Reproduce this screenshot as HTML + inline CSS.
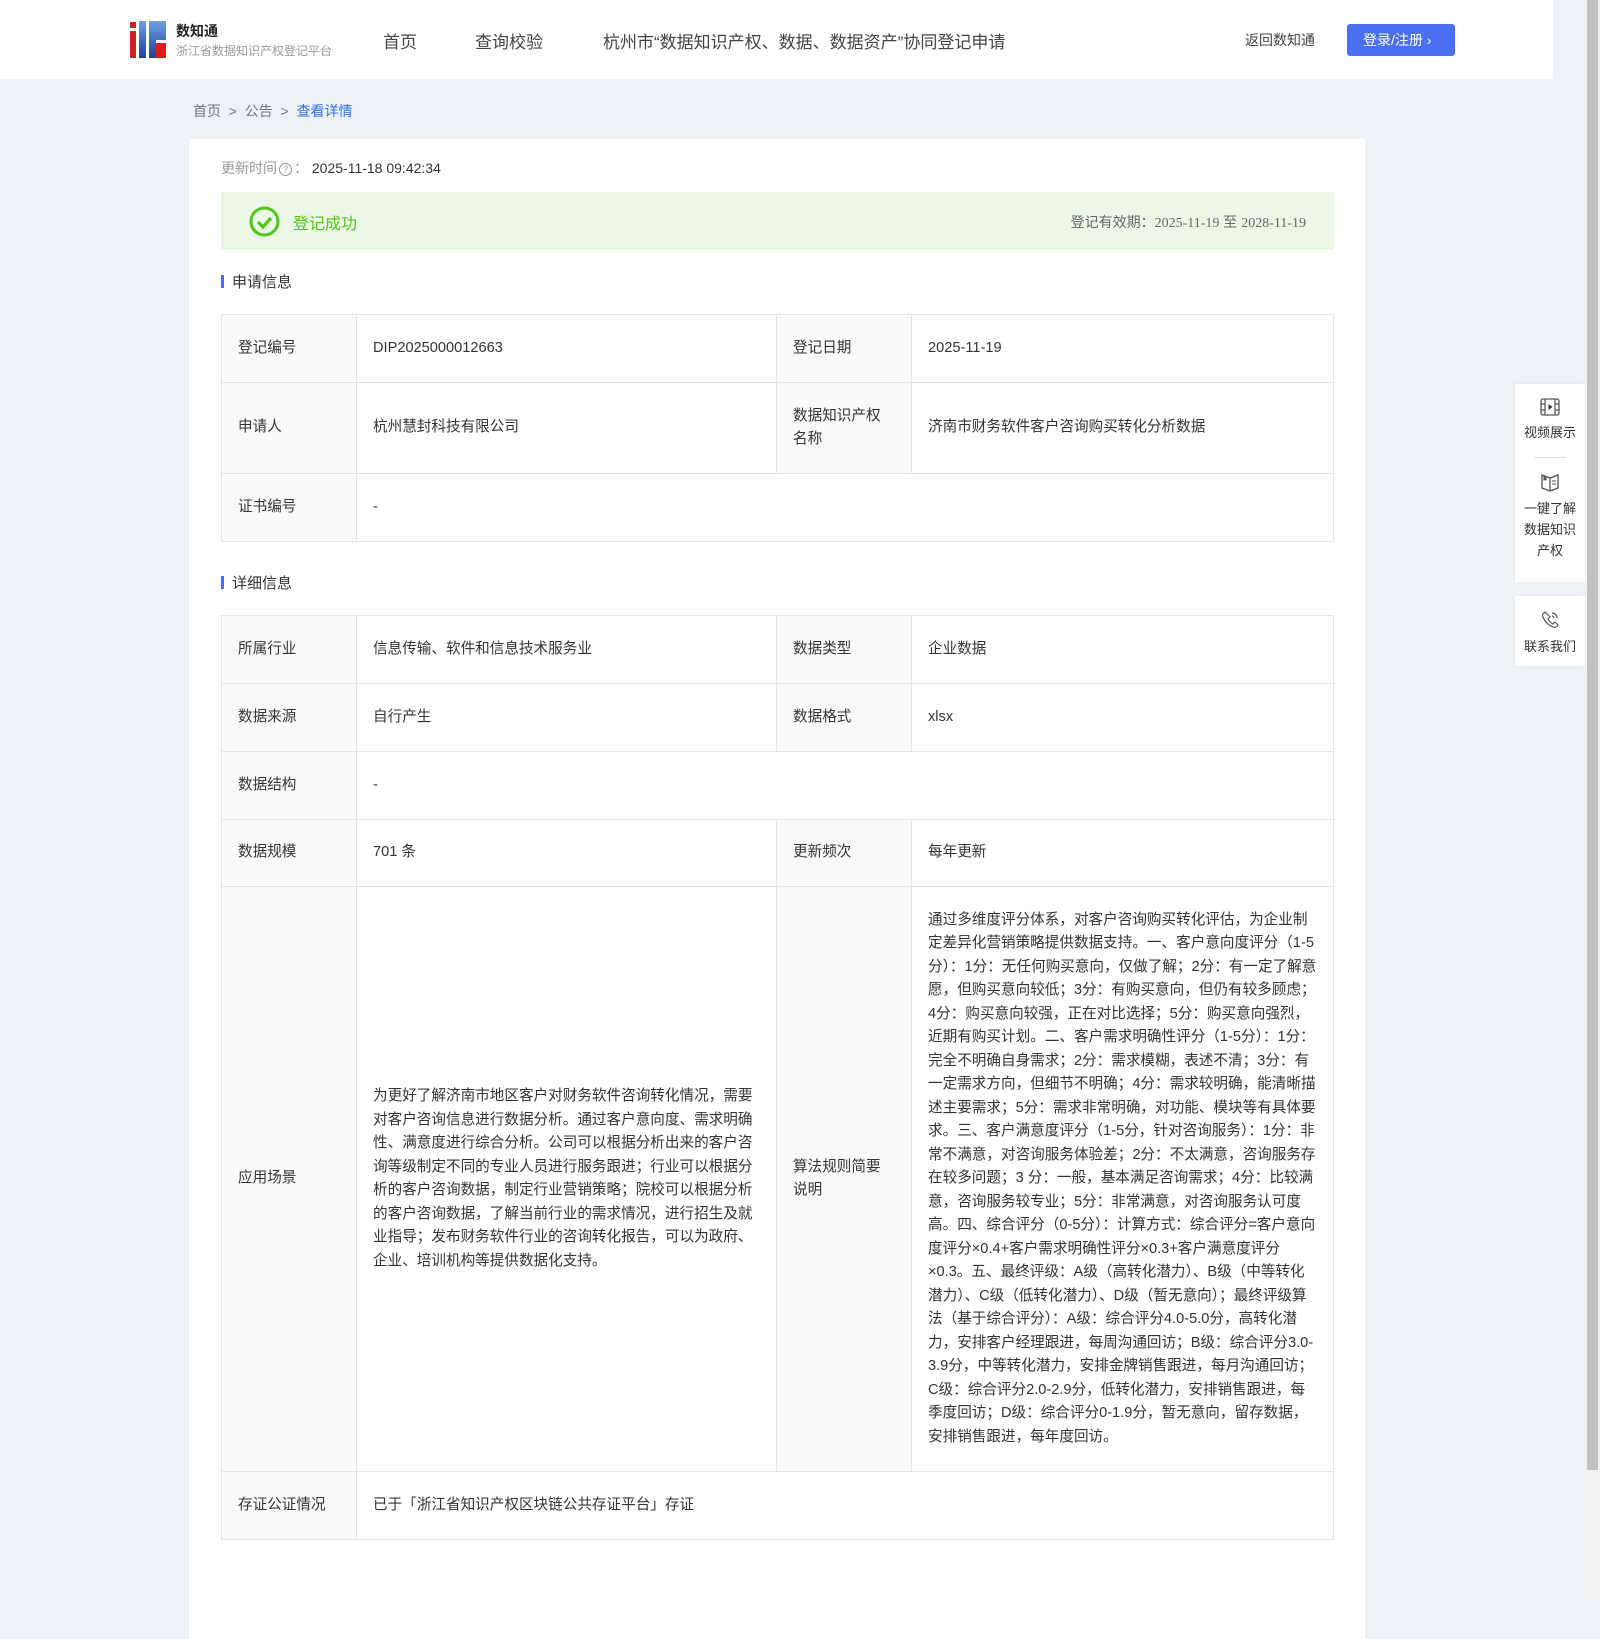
<!DOCTYPE html>
<html><head><meta charset="utf-8"><style>
*{margin:0;padding:0;box-sizing:border-box}
body{width:1600px;height:1600px;background:#eef2f5;font-family:"Liberation Sans","Noto Sans CJK SC",sans-serif;color:#333;font-size:14px;position:relative;overflow:hidden}
.hdr{position:absolute;left:0;top:0;width:1553px;height:79px;background:#fff}
.abs{position:absolute}
.sb{position:absolute;right:0;top:0;width:15px;height:1600px;background:#f1f1f1}
.sb div{position:absolute;left:2px;right:2px;top:0;height:1470px;background:#c1c1c1}
.card{position:absolute;left:189px;top:139px;width:1176px;height:1500px;background:#fff}
table{position:absolute;left:32px;width:1113px;border-collapse:collapse;table-layout:fixed}
td{border:1px solid #e4e4e4;padding:0 16px;font-size:14.6px;line-height:23.5px;color:#333;vertical-align:middle}
td.l{background:#fafafa}
.sec{position:absolute;left:32px;font-size:15px;color:#333}
.sec:before{content:"";display:inline-block;width:3px;height:13px;background:#4a6ff0;margin-right:8px;vertical-align:-1px}
.side{position:absolute;left:1515px;width:70px;background:#fff;text-align:center;font-size:13px;color:#333;line-height:21px;box-shadow:0 0 6px rgba(0,0,0,.05)}
</style></head><body>
<div class="hdr">
 <svg class="abs" style="left:130px;top:21px" width="36" height="37" viewBox="0 0 36 37">
  <defs><linearGradient id="g" x1="0" y1="0" x2="0" y2="1"><stop offset="0" stop-color="#6fa0e0"/><stop offset="1" stop-color="#1e3e9c"/></linearGradient></defs>
  <rect x="0" y="1" width="6" height="6" fill="#d81e1e"/><rect x="0" y="10" width="6" height="27" fill="#d81e1e"/>
  <rect x="9" y="0" width="7" height="37" fill="url(#g)"/>
  <path d="M19 0h17v19h-10v18h-7z" fill="url(#g)"/><rect x="26" y="22" width="10" height="15" fill="#d81e1e"/>
 </svg>
 <div class="abs" style="left:176px;top:21px;font-size:14px;font-weight:bold;color:#222">数知通</div>
 <div class="abs" style="left:176px;top:42px;font-size:12px;color:#999">浙江省数据知识产权登记平台</div>
 <div class="abs" style="left:383px;top:28px;font-size:17px;color:#444">首页</div>
 <div class="abs" style="left:475px;top:28px;font-size:17px;color:#444">查询校验</div>
 <div class="abs" style="left:603px;top:28px;font-size:17px;color:#444">杭州市“数据知识产权、数据、数据资产”协同登记申请</div>
 <div class="abs" style="left:1245px;top:30px;font-size:14px;color:#444">返回数知通</div>
 <div class="abs" style="left:1347px;top:24px;width:108px;height:32px;background:#4a6ff0;border-radius:3px;color:#fff;font-size:14px;line-height:32px;padding-left:16px">登录/注册 ›</div>
</div>
<div class="abs" style="left:193px;top:101px;font-size:14px;color:#777">首页 &nbsp;&gt;&nbsp; 公告 &nbsp;&gt;&nbsp; <span style="color:#2f6fe6">查看详情</span></div>
<div class="card">
 <div class="abs" style="left:32px;top:19px;font-size:14px;color:#999">更新时间<span style="display:inline-block;width:13px;height:13px;border:1px solid #999;border-radius:50%;font-size:9px;line-height:11px;text-align:center;vertical-align:1px;margin:0 2px">?</span>： <span style="color:#333">2025-11-18 09:42:34</span></div>
 <div class="abs" style="left:32px;top:53px;width:1113px;height:58px;background:#ecf8e6">
  <svg class="abs" style="left:28px;top:14px" width="31" height="31" viewBox="0 0 31 31"><circle cx="15.5" cy="15.5" r="13.5" fill="none" stroke="#52c41a" stroke-width="3"/><path d="M9 16l5 5 8-9" fill="none" stroke="#52c41a" stroke-width="3.2"/></svg>
  <div class="abs" style="left:72px;top:18px;font-size:16px;color:#52c41a">登记成功</div>
  <div class="abs" style="right:28px;top:20px;font-size:14px;color:#666">登记有效期：<span style="font-family:'Liberation Serif',serif">2025-11-19</span> 至 <span style="font-family:'Liberation Serif',serif">2028-11-19</span></div>
 </div>
 <div class="sec" style="top:132px">申请信息</div>
 <table style="top:175px">
  <colgroup><col style="width:135px"><col style="width:420px"><col style="width:135px"><col></colgroup>
  <tr style="height:68px"><td class="l">登记编号</td><td>DIP2025000012663</td><td class="l">登记日期</td><td>2025-11-19</td></tr>
  <tr style="height:91px"><td class="l">申请人</td><td>杭州慧封科技有限公司</td><td class="l">数据知识产权名称</td><td>济南市财务软件客户咨询购买转化分析数据</td></tr>
  <tr style="height:68px"><td class="l">证书编号</td><td colspan="3">-</td></tr>
 </table>
 <div class="sec" style="top:433px">详细信息</div>
 <table style="top:476px">
  <colgroup><col style="width:135px"><col style="width:420px"><col style="width:135px"><col></colgroup>
  <tr style="height:68px"><td class="l">所属行业</td><td>信息传输、软件和信息技术服务业</td><td class="l">数据类型</td><td>企业数据</td></tr>
  <tr style="height:68px"><td class="l">数据来源</td><td>自行产生</td><td class="l">数据格式</td><td>xlsx</td></tr>
  <tr style="height:68px"><td class="l">数据结构</td><td colspan="3">-</td></tr>
  <tr style="height:67px"><td class="l">数据规模</td><td>701 条</td><td class="l">更新频次</td><td>每年更新</td></tr>
  <tr style="height:585px"><td class="l">应用场景</td><td>为更好了解济南市地区客户对财务软件咨询转化情况，需要对客户咨询信息进行数据分析。通过客户意向度、需求明确性、满意度进行综合分析。公司可以根据分析出来的客户咨询等级制定不同的专业人员进行服务跟进；行业可以根据分析的客户咨询数据，制定行业营销策略；院校可以根据分析的客户咨询数据，了解当前行业的需求情况，进行招生及就业指导；发布财务软件行业的咨询转化报告，可以为政府、企业、培训机构等提供数据化支持。</td><td class="l">算法规则简要说明</td><td>通过多维度评分体系，对客户咨询购买转化评估，为企业制定差异化营销策略提供数据支持。一、客户意向度评分（1-5分）：1分：无任何购买意向，仅做了解；2分：有一定了解意愿，但购买意向较低；3分：有购买意向，但仍有较多顾虑；4分：购买意向较强，正在对比选择；5分：购买意向强烈，近期有购买计划。二、客户需求明确性评分（1-5分）：1分：完全不明确自身需求；2分：需求模糊，表述不清；3分：有一定需求方向，但细节不明确；4分：需求较明确，能清晰描述主要需求；5分：需求非常明确，对功能、模块等有具体要求。三、客户满意度评分（1-5分，针对咨询服务）：1分：非常不满意，对咨询服务体验差；2分：不太满意，咨询服务存在较多问题；3 分：一般，基本满足咨询需求；4分：比较满意，咨询服务较专业；5分：非常满意，对咨询服务认可度高。四、综合评分（0-5分）：计算方式：综合评分=客户意向度评分×0.4+客户需求明确性评分×0.3+客户满意度评分×0.3。五、最终评级：A级（高转化潜力）、B级（中等转化潜力）、C级（低转化潜力）、D级（暂无意向）；最终评级算法（基于综合评分）：A级：综合评分4.0-5.0分，高转化潜力，安排客户经理跟进，每周沟通回访；B级：综合评分3.0-3.9分，中等转化潜力，安排金牌销售跟进，每月沟通回访；C级：综合评分2.0-2.9分，低转化潜力，安排销售跟进，每季度回访；D级：综合评分0-1.9分，暂无意向，留存数据，安排销售跟进，每年度回访。</td></tr>
  <tr style="height:68px"><td class="l">存证公证情况</td><td colspan="3">已于「浙江省知识产权区块链公共存证平台」存证</td></tr>
 </table>
</div>
<div class="side" style="top:384px;height:198px">
 <svg style="margin-top:14px" width="20" height="18" viewBox="0 0 20 18"><rect x="1" y="1" width="18" height="16" rx="2" fill="none" stroke="#555" stroke-width="1.3"/><path d="M5 1v16M15 1v16M1 6h4M1 12h4M15 6h4M15 12h4" stroke="#555" stroke-width="1.2"/><path d="M8.5 6v6l4-3z" fill="#333"/></svg>
 <div>视频展示</div>
 <div style="width:32px;height:1px;background:#ddd;margin:14px auto 14px"></div>
 <svg width="20" height="20" viewBox="0 0 20 20"><path d="M2 3l8 3 8-3v13l-8 3-8-3z M10 6v13" fill="none" stroke="#555" stroke-width="1.3"/><path d="M3.5 4v5l1.5-1 1.5 1V5" fill="#555"/><path d="M12 9h4M12 12h4" stroke="#555" stroke-width="1.1"/></svg>
 <div>一键了解<br>数据知识<br>产权</div>
</div>
<div class="side" style="top:596px;height:70px">
 <svg style="margin-top:14px" width="20" height="20" viewBox="0 0 20 20"><path d="M5 2c-2 1-3 3-2 5 2 5 5 8 10 10 2 1 4 0 5-2l-3-3-2 2c-2-1-4-3-5-5l2-2z" fill="none" stroke="#555" stroke-width="1.2"/><path d="M12 3a5 5 0 0 1 5 5M12 6a2 2 0 0 1 2 2" fill="none" stroke="#555" stroke-width="1.2"/></svg>
 <div>联系我们</div>
</div>
<div class="sb"><div></div></div>
</body></html>
